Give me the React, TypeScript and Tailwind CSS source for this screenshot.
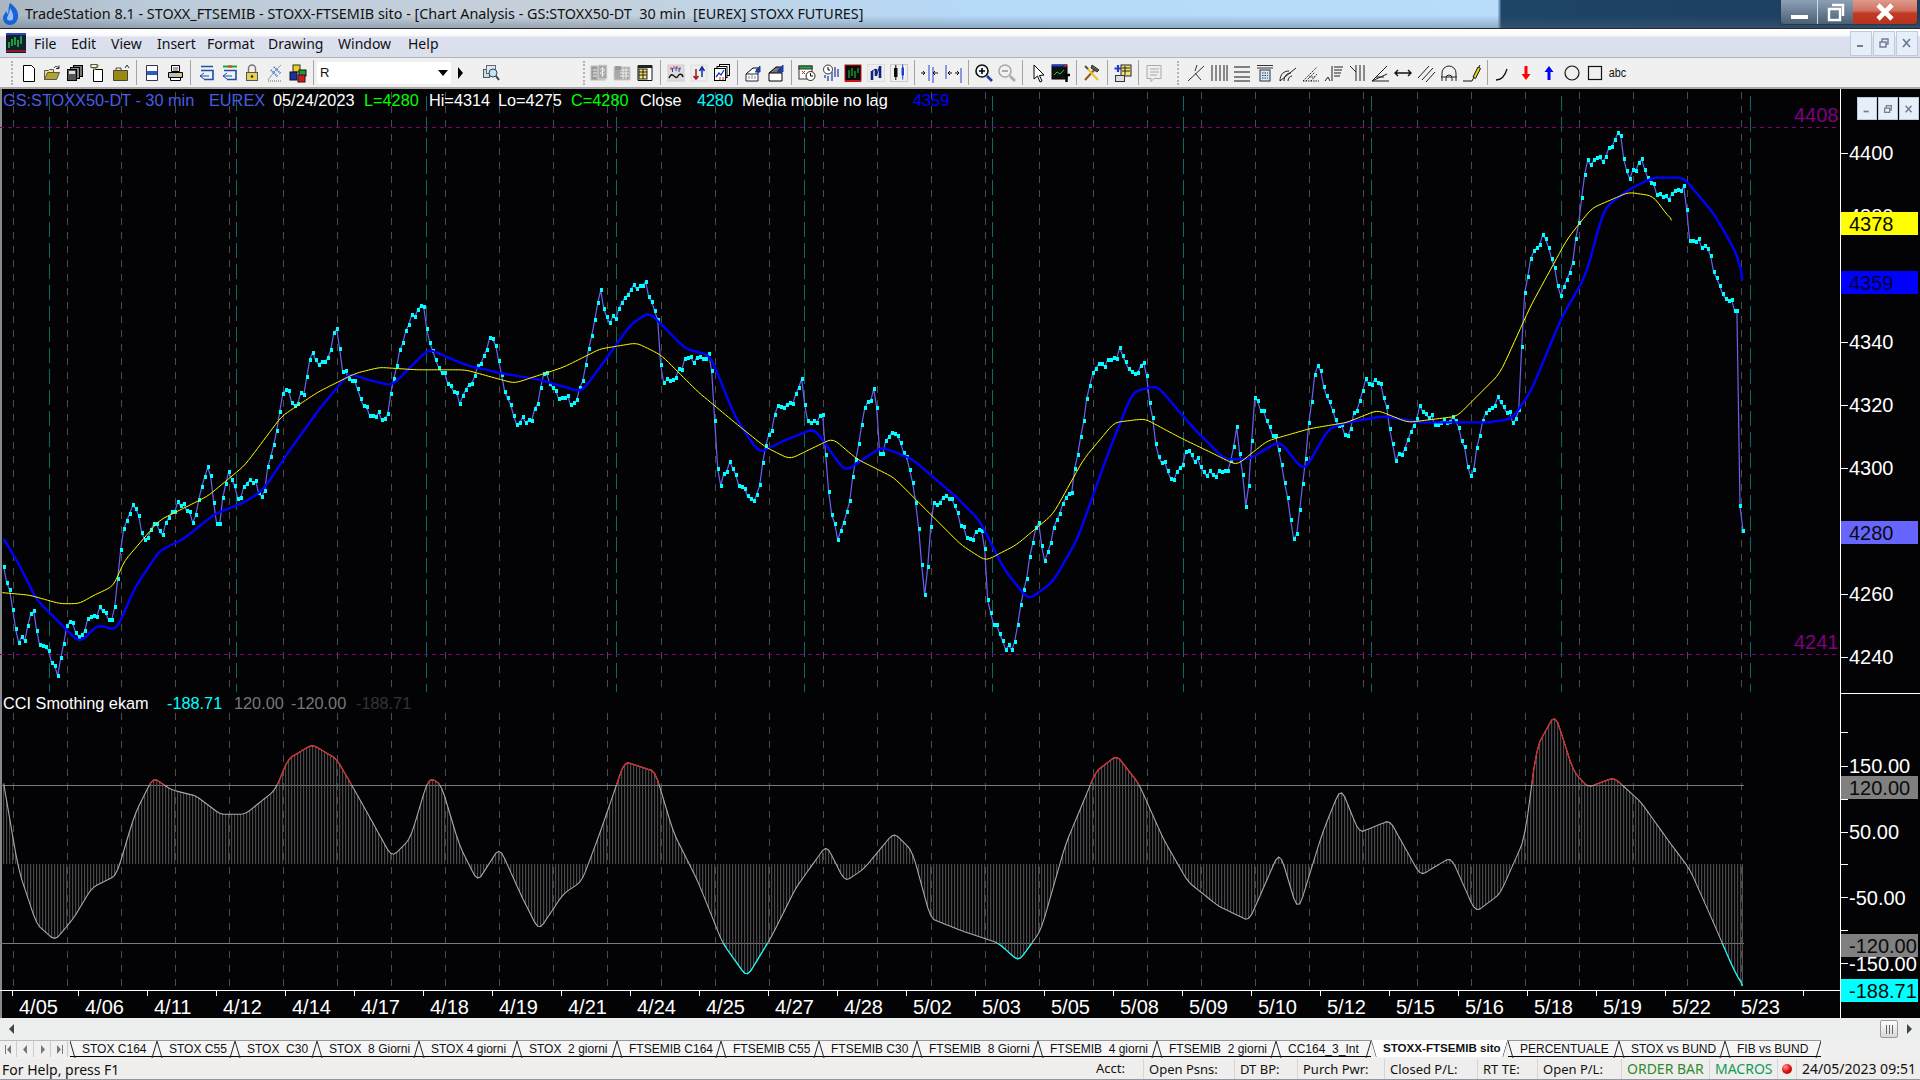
import React from 'react';

// reference coordinates were read off at 1568 wide, S scales them up to 1920
const S = 1920 / 1568;

type Pt = [number, number];

const PRICE: Pt[] = [[3,463],[8,482],[14,520],[20,525],[26,497],[32,525],[40,530],[47,553],[52,525],[58,505],[64,522],[72,505],[85,500],[92,510],[96,470],[100,435],[106,417],[112,417],[118,445],[125,425],[133,435],[140,420],[150,410],[158,425],[170,380],[178,435],[186,380],[195,410],[205,390],[215,405],[220,375],[226,355],[232,315],[240,330],[248,320],[254,290],[262,300],[268,290],[275,265],[280,305],[290,315],[300,335],[316,345],[322,305],[332,265],[345,250],[352,285],[365,310],[375,330],[390,300],[403,275],[410,310],[422,345],[435,345],[445,300],[455,325],[470,330],[480,290],[490,240],[497,265],[512,240],[528,232],[537,260],[541,315],[552,310],[560,290],[575,295],[580,290],[585,360],[587,400],[595,375],[605,400],[617,410],[625,365],[635,335],[645,330],[655,310],[660,350],[672,340],[678,415],[685,440],[692,420],[700,370],[705,335],[715,315],[718,375],[730,350],[740,370],[748,410],[755,490],[762,410],[775,405],[790,440],[803,430],[807,500],[820,525],[827,530],[835,490],[848,420],[852,460],[865,420],[875,400],[885,340],[892,305],[905,295],[915,285],[925,310],[935,295],[945,370],[958,395],[970,365],[985,390],[1005,380],[1010,350],[1018,420],[1025,320],[1035,345],[1045,370],[1058,445],[1065,385],[1075,295],[1090,340],[1100,360],[1115,310],[1128,315],[1140,375],[1150,360],[1160,335],[1175,345],[1190,345],[1202,390],[1210,345],[1225,325],[1235,342],[1240,342],[1245,240],[1252,205],[1262,190],[1275,245],[1285,210],[1295,135],[1310,130],[1322,105],[1330,150],[1340,130],[1352,155],[1360,165],[1375,150],[1380,195],[1395,205],[1405,235],[1418.5,256],[1421,413],[1423.5,434]];

const BLUE: Pt[] = [[3,440],[15,460],[30,490],[50,510],[65,525],[80,510],[95,515],[110,480],[130,450],[150,440],[175,420],[200,410],[215,400],[235,370],[260,335],[285,305],[300,310],[320,315],[350,285],[380,298],[410,305],[440,310],[475,320],[490,300],[515,265],[530,255],[560,285],[580,290],[600,340],[620,370],[640,360],[665,350],[690,385],[720,365],[745,375],[780,405],[800,425],[820,465],[840,490],[860,475],[880,440],[905,370],[925,320],[945,315],[975,350],[1000,375],[1020,375],[1045,360],[1065,385],[1085,350],[1100,345],[1130,340],[1160,345],[1190,345],[1215,345],[1235,342],[1250,320],[1275,260],[1295,225],[1310,170],[1330,155],[1350,145],[1375,145],[1400,175],[1420,210],[1423,229]];

const YELLOW: Pt[] = [[2,484],[24,486],[49,493],[65,493],[75,487],[94,478],[100,460],[130,425],[170,405],[200,380],[230,340],[260,320],[290,305],[310,300],[340,302],[380,302],[420,313],[460,300],[490,285],[520,280],[540,290],[570,320],[600,345],[625,365],[645,375],[680,358],[700,375],[730,390],[760,420],[785,445],[805,458],[830,445],[860,420],[885,375],[910,345],[935,342],[965,358],[990,370],[1010,380],[1035,360],[1070,350],[1100,345],[1125,335],[1150,345],[1190,340],[1225,305],[1250,250],[1280,195],[1300,170],[1330,157],[1350,160],[1365,180]];

const CCI: Pt[] = [[3,640],[15,710],[30,755],[45,768],[60,750],[75,725],[95,715],[110,665],[125,635],[140,645],[160,650],[180,665],[200,665],[225,645],[235,620],[255,608],[275,620],[295,655],[320,700],[335,685],[350,635],[360,640],[375,690],[390,720],[408,692],[425,730],[440,760],[460,730],[475,720],[490,680],[510,622],[535,630],[550,680],[570,720],[590,770],[610,798],[630,765],[650,725],[675,690],[690,720],[705,710],[730,680],[745,695],[760,750],[785,760],[815,770],[832,785],[850,760],[870,690],[895,630],[912,617],[930,640],[950,685],[970,720],[995,740],[1020,752],[1045,695],[1060,745],[1080,680],[1095,643],[1110,680],[1135,670],[1160,715],[1185,700],[1205,745],[1225,730],[1245,685],[1255,610],[1270,583],[1285,630],[1297,643],[1318,635],[1340,655],[1365,690],[1380,710],[1400,755],[1415,790],[1423,805]];

const scale = (pts: Pt[]): Pt[] => pts.map(([x, y]) => [x * S, y * S]);

// walk the polyline in equal x steps
const resample = (pts: Pt[], step: number): Pt[] => {
  const out: Pt[] = [];
  let seg = 0;
  for (let x = pts[0][0]; x <= pts[pts.length - 1][0]; x += step) {
    while (seg < pts.length - 2 && pts[seg + 1][0] < x) seg++;
    const [x0, y0] = pts[seg];
    const [x1, y1] = pts[seg + 1];
    out.push([x, y0 + ((y1 - y0) * (x - x0)) / (x1 - x0)]);
  }
  out.push(pts[pts.length - 1]);
  return out;
};

const smooth = (pts: Pt[], passes: number): Pt[] => {
  let cur = pts;
  for (let p = 0; p < passes; p++) {
    cur = cur.map((pt, i) =>
      i === 0 || i === cur.length - 1 ? pt : [pt[0], (cur[i - 1][1] + pt[1] + cur[i + 1][1]) / 3] as Pt,
    );
  }
  return cur;
};

const toPath = (pts: Pt[]) => pts.map(([x, y]) => `${x.toFixed(1)},${y.toFixed(1)}`).join(' ');

// the bars: 3px apart with a bit of noise so the line looks like ticks
const priceBars: Pt[] = (() => {
  const raw = scale(PRICE);
  const body = resample(raw.slice(0, -2), 3).map(
    ([x, y], i) => [x, y + Math.sin(i * 1.7) * 2.5 + Math.sin(i * 2.9) * 2 + Math.sin(i * 0.53) * 2.5] as Pt,
  );
  return [...body, raw[raw.length - 2], raw[raw.length - 1]];
})();
const bluePts = smooth(resample(scale(BLUE), 3), 2);
const yellowPts = smooth(resample(scale(YELLOW), 3), 2);
const cciPts = smooth(resample(scale(CCI), 3), 1);

const ZERO_Y = 864;
const grayX = Array.from({ length: 33 }, (_, i) => 13 + i * 54);
const tealX = [49, 236, 426, 616, 804, 992, 1183, 1371, 1561, 1750];
const tickX = [12, ...Array.from({ length: 26 }, (_, i) => 78 + i * 69)];

const priceY = (p: number) => 152.5 + (4400 - p) * 3.15 - 89;

const DATES = ['4/06','4/11','4/12','4/14','4/17','4/18','4/19','4/21','4/24','4/25','4/27','4/28','5/02','5/03','5/05','5/08','5/09','5/10','5/12','5/15','5/16','5/18','5/19','5/22','5/23'];

const TABS = [
  { label: 'STOX C164', w: 'w-[87px]' },
  { label: 'STOX C55', w: 'w-[78px]' },
  { label: 'STOX  C30', w: 'w-[82px]' },
  { label: 'STOX  8 Giorni', w: 'w-[102px]' },
  { label: 'STOX 4 giorni', w: 'w-[98px]' },
  { label: 'STOX  2 giorni', w: 'w-[100px]' },
  { label: 'FTSEMIB C164', w: 'w-[104px]' },
  { label: 'FTSEMIB C55', w: 'w-[98px]' },
  { label: 'FTSEMIB C30', w: 'w-[98px]' },
  { label: 'FTSEMIB  8 Giorni', w: 'w-[121px]' },
  { label: 'FTSEMIB  4 giorni', w: 'w-[119px]' },
  { label: 'FTSEMIB  2 giorni', w: 'w-[119px]' },
  { label: 'CC164_3_Int', w: 'w-[95px]' },
  { label: 'STOXX-FTSEMIB sito', w: 'w-[137px]', active: true },
  { label: 'PERCENTUALE', w: 'w-[111px]' },
  { label: 'STOX vs BUND', w: 'w-[106px]' },
  { label: 'FIB vs BUND', w: 'w-[96px]' },
];

const Ico: React.FC<{ children: React.ReactNode }> = ({ children }) => (
  <svg width="20" height="20" viewBox="0 0 20 20" fill="none" stroke="#000" strokeWidth="1">
    {children}
  </svg>
);

const ICONS: Record<string, React.ReactNode> = {
  newDoc: <path d="M4.5 2.5h8l3 3v13h-11z" fill="#fff" />,
  open: <><path d="M2.5 16.5v-9h4l1 -1h4v3" fill="#f4e38a" stroke="#555" /><path d="M2.5 16.5l3-7h12l-3 7z" fill="#b5a230" stroke="#555" /><path d="M12 5c1-2 3-2 5 0M17 2.5v3h-3" stroke="#222" /></>,
  saveAll: <><rect x="8.5" y="2.5" width="9" height="11" fill="#777" /><rect x="5.5" y="4.5" width="9" height="11" fill="#888" /><rect x="2.5" y="6.5" width="9" height="11" fill="#555" /><rect x="4" y="8" width="6" height="3" fill="#ddd" stroke="none" /></>,
  saveNew: <><path d="M5.5 6.5h9v12h-9z" fill="#fff" /><path d="M2.5 2l4 4 4-4" stroke="#b5a230" strokeWidth="2" /><rect x="3" y="1.5" width="6" height="3" fill="#eee" stroke="#555" /></>,
  folderUp: <><path d="M2.5 17.5v-10h14v10z" fill="#9a8a10" stroke="#444" /><path d="M5 7v-2h5v2" stroke="#444" /><path d="M14 5l2-3 2 3" stroke="#234" /></>,
  doc: <><path d="M4.5 2.5h11v15h-11z" fill="#fff" stroke="#335" /><rect x="5" y="8" width="10" height="4" fill="#2a5fc8" stroke="none" /></>,
  printer: <><path d="M6.5 2.5h8v6h-8z" fill="#fff" /><path d="M3.5 9.5h14v5h-14z" fill="#bbb" /><path d="M5.5 14.5h10v3h-10z" fill="#fff" /><path d="M8 5h5M8 7h5" stroke="#555" /><rect x="13" y="10.5" width="3" height="2" fill="#f4d03f" stroke="none" /></>,
  backBlue: <><path d="M5 3.5h12M5 7.5h12v9h-9" stroke="#1c4fa8" strokeWidth="1.6" /><path d="M8 10l-4 3 4 3" stroke="#1c4fa8" /><path d="M4 13h9" stroke="#1c4fa8" /></>,
  backBar: <><path d="M4 3.5h14" stroke="#17a82e" strokeWidth="2" /><rect x="9" y="2.5" width="4" height="2" fill="#e33" stroke="none" /><path d="M5 7.5h12v9h-9" stroke="#1c4fa8" strokeWidth="1.6" /><path d="M8 10l-4 3 4 3M4 13h9" stroke="#1c4fa8" /></>,
  lock: <><path d="M6.5 9V5.5a3.5 3.5 0 0 1 7 0V9" stroke="#777" strokeWidth="1.5" /><rect x="4.5" y="9.5" width="11" height="8" fill="#e9cf52" stroke="#555" /><circle cx="10" cy="13.5" r="1.2" fill="#222" stroke="none" /></>,
  antenna: <><path d="M3 17l6-8 7-7" stroke="#999" /><path d="M9 4l7 7M6 7l7 7" stroke="#2a6fd8" strokeDasharray="1 1" strokeWidth="2" /><path d="M3 18h13" stroke="#666" strokeDasharray="1 1" /></>,
  cubes: <><rect x="5" y="2" width="7" height="7" fill="#e8d020" stroke="#332" /><rect x="2" y="9" width="7" height="8" fill="#1d2f9c" stroke="#112" /><rect x="11" y="7" width="7" height="6" fill="#1c9c35" stroke="#112" /><rect x="10" y="12" width="7" height="7" fill="#cc1d1d" stroke="#311" /></>,
  finder: <><rect x="2.5" y="6.5" width="6" height="8" fill="#cdd" stroke="#556" /><rect x="5.5" y="2.5" width="9" height="8" fill="#dfe8f0" stroke="#667" /><circle cx="12" cy="10" r="4" fill="#bfe3f7" stroke="#345" /><path d="M15 13l3 4" strokeWidth="2" stroke="#345" /></>,
  dollar: <><rect x="2" y="3" width="14" height="14" fill="#9c9c9c" stroke="#bbb" /><rect x="9" y="2" width="9" height="14" fill="#a8a8a8" stroke="#ddd" /><path d="M4 7h4M4 10h4M4 13h4" stroke="#eee" /><path d="M13.5 4v10M11.5 7c0-2 4-2 4 0s-4 1-4 3 4 2 4 0" stroke="#eee" /></>,
  grid: <><rect x="2" y="4" width="16" height="13" fill="#a8a8a8" stroke="#ccc" /><path d="M8 7h9M8 10h9M8 13h9M11 5v11M14 5v11" stroke="#ececec" /><rect x="3" y="3" width="6" height="4" fill="#999" stroke="none" /></>,
  sheet: <><path d="M3 2.5h14v15H3z" fill="#fff" stroke="#111" /><rect x="3" y="2" width="14" height="3" fill="#222" stroke="none" /><rect x="4" y="6" width="8" height="10" fill="#f3e46a" stroke="#222" /><path d="M4 9h8M4 12h8M8 6v10" stroke="#222" /></>,
  heat: <><rect x="2" y="2" width="16" height="16" fill="#ddd" stroke="#ccc" /><path d="M3 15c2-4 3-4 5-2s3 2 4 0 4-3 5 1" stroke="#111" strokeWidth="1.4" /><path d="M5 4v3M8 3v3M11 3v3M14 4v3" stroke="#d02020" /><path d="M6.5 5v4M10 4v4M13 5v4" stroke="#2040c0" /></>,
  upDown: <><rect x="2" y="2" width="16" height="16" fill="#eee" stroke="#ddd" /><path d="M7 6v10M4.5 13l2.5 3 2.5-3" stroke="#a01515" strokeWidth="1.5" /><path d="M13 14V5M10.5 8L13 4l2.5 4" stroke="#1530a0" strokeWidth="1.5" /></>,
  windows: <><rect x="7.5" y="1.5" width="10" height="11" fill="#fff" /><rect x="5" y="3.5" width="10" height="11" fill="#fff" /><rect x="2.5" y="5.5" width="11" height="12" fill="#fff" /><path d="M4 14l3-4 2 2 3-5" stroke="#1040c0" strokeWidth="1.3" /><path d="M8 17v-3M11 17v-3" stroke="#c02020" /></>,
  chartIn: <><path d="M3 11l7-6h5v6" fill="#fff" /><path d="M3 11h12v7H3z" fill="#fff" stroke="#224" /><path d="M6 13v3M9 12v4M12 13v3" stroke="#888" /><path d="M13 7l4-4v6h-5" fill="#1c3fa0" stroke="#1c3fa0" /></>,
  chartOut: <><path d="M3 10l7-6h5v6" fill="#777" /><path d="M3 10h13v8H3z" fill="#fff" stroke="#000" /><path d="M12 7l5-5v7h-6" fill="#1c3fa0" stroke="#1c3fa0" /></>,
  calClock: <><rect x="2" y="3" width="13" height="13" fill="#fff" stroke="#333" /><rect x="2" y="3" width="13" height="3" fill="#27a83b" stroke="#333" /><path d="M5 8l3 3M8 8l-3 3" stroke="#c02020" /><circle cx="13.5" cy="13" r="4.5" fill="#fff" stroke="#222" /><path d="M13.5 10v3h2.5" /></>,
  clockBars: <><circle cx="8" cy="6.5" r="4.5" fill="#fff" stroke="#333" /><path d="M8 4v3h2" /><path d="M15 4v10M18 6v8M12 9v9M8 13v5M5 12v3" stroke="#4258a8" strokeWidth="1.5" /></>,
  greenScr: <><rect x="2" y="2" width="16" height="16" fill="#0a0a0a" stroke="#c01515" /><path d="M6 7v8M9 5v8M12 8v7M15 5v5" stroke="#1fd03a" /><path d="M2 18h16" stroke="#d01515" strokeWidth="2" /></>,
  blueBars: <><rect x="1.5" y="1.5" width="17" height="17" fill="#eee" stroke="#ddd" /><path d="M6 8v9M10 6v7M14 3v12" stroke="#11207a" strokeWidth="2.6" /><path d="M6 8l4-2M10 13l4-10" stroke="#11207a" /></>,
  candles: <><rect x="1.5" y="1.5" width="17" height="17" fill="#eee" stroke="#ccc" /><rect x="5" y="5" width="3.5" height="9" fill="#111" stroke="none" /><path d="M6.8 2v15" /><rect x="12" y="4" width="3.5" height="9" fill="#1c3fd0" stroke="#fff" /><path d="M13.7 1.5v15" stroke="#1c3fd0" /></>,
  barsIn: <><path d="M9 2v16M13 4v16" stroke="#2045c8" /><path d="M1 10h4M3 8l2 2-2 2M13 10h5M15 8l-2 2 2 2" stroke="#111" /></>,
  barsOut: <><path d="M3 2v14M18 5v15" stroke="#2045c8" /><path d="M5 10h4M7 8l-2 2 2 2M12 10h4M14 8l2 2-2 2" stroke="#111" /></>,
  zoomIn: <><circle cx="8" cy="8" r="6" fill="#eef7fb" stroke="#111" strokeWidth="1.6" /><path d="M13 13l5 5" stroke="#1c3fa0" strokeWidth="2.6" /><path d="M5 8h6M8 5v6" strokeWidth="1.6" /></>,
  zoomOut: <><circle cx="8" cy="8" r="6" fill="#f2f2f2" stroke="#aaa" strokeWidth="1.6" /><path d="M13 13l5 5" stroke="#aaa" strokeWidth="2.6" /><path d="M5 8h6" stroke="#999" strokeWidth="1.6" /></>,
  cursor: <path d="M6 2l0 14 3.5-3 2.5 6 2-1-2.5-5.5 4.5-.5z" fill="#fff" />,
  chartT: <><rect x="1" y="2" width="15" height="14" fill="#111" /><path d="M1 2.5h15" stroke="#1c3fd0" strokeWidth="2" /><rect x="13" y="1.5" width="3" height="2" fill="#d02020" stroke="none" /><path d="M3 12l3-3 3 2 4-4" stroke="#20d040" /><path d="M12 12h7M15.5 12v7" strokeWidth="2.4" /></>,
  tools: <><path d="M3 17L14 5" stroke="#8a5a20" strokeWidth="2" /><path d="M10 2l7 5-2 2-6-4z" fill="#555" stroke="#333" /><path d="M4 4l12 13" stroke="#e8c820" strokeWidth="2" /><path d="M3 3l3 3" stroke="#555" strokeWidth="2" /></>,
  addList: <><rect x="8" y="2" width="10" height="11" fill="#f3e46a" stroke="#223" /><path d="M9 5h8M9 8h8M12 3v9" stroke="#223" /><path d="M5 2v7M1.5 5.5h7" stroke="#1c3fd0" strokeWidth="2.2" /><rect x="2.5" y="12.5" width="9" height="6" fill="#ddd" stroke="#335" /></>,
  noteOff: <><path d="M3 2.5h14v13h-7l-3 3v-3H3z" fill="#eee" stroke="#aaa" /><path d="M6 6h9M6 9h9M6 12h7" stroke="#aaa" /></>,
  fork: <><path d="M2 18L18 3M9 10l6 7" stroke="#333" /><path d="M11 2l-2 6" stroke="#333" /></>,
  vlines: <path d="M3 2v16M7 2v16M11 2v16M15 2v16M18 2v16" stroke="#222" />,
  hlines: <path d="M2 4h16M2 9h16M2 14h16M2 18h16" stroke="#111" strokeWidth="1.2" />,
  calc: <><path d="M2 2.5h16M2 5h16" stroke="#333" /><rect x="5" y="7" width="10" height="11" fill="#dbe8f8" stroke="#234" /><path d="M7 10h6M7 12.5h6M7 15h6" stroke="#234" strokeDasharray="1.5 1" /></>,
  arcs: <><path d="M2 18c0-7 4-10 9-10M6 18c0-5 3-8 7-8M10 18c0-3 2-5 4-5" stroke="#222" /><path d="M2 18L18 5" stroke="#222" /></>,
  fan: <path d="M2 18h16M2 18L16 4M8 14l6 0M5 18L14 9M10 18l6-7" stroke="#222" strokeDasharray="1.5 1" />,
  speed: <><path d="M1 18l3-4 2 4M8 18V3M10 4h9M10 7h8M10 10h7M10 13h6" stroke="#222" /></>,
  gann: <path d="M3 3l6 6M9 2v16M13 2v16M17 2v16" stroke="#222" />,
  angle: <path d="M2 18L17 3M2 18h17M6 14l8 0M2 18l15-7" stroke="#222" />,
  arrows: <path d="M2 10h16M5 7l-3 3 3 3M15 7l3 3-3 3" stroke="#111" strokeWidth="1.4" />,
  channel: <path d="M2 15L13 3M6 17L17 5M10 19L19 9" stroke="#222" />,
  cycles: <path d="M3 18v-8a7 7 0 0 1 14 0v8M7 18v-3a3 3 0 0 1 6 0v3M2 14h16" stroke="#222" />,
  pencil: <><path d="M1 18h9l8-16" stroke="#111" /><path d="M11 14l5-10 2.5 1.5-5 10z" fill="#e8d020" stroke="#111" /></>,
  curve: <path d="M3 17c5 0 9-4 11-11" stroke="#111" strokeWidth="1.3" />,
  arrowDown: <path d="M8.5 3h3v8h3l-4.5 6-4.5-6h3z" fill="#f00" stroke="none" />,
  arrowUp: <path d="M8.5 17h3V9h3L10 3 5.500 9h3z" fill="#00f" stroke="none" />,
  circle: <circle cx="10" cy="10" r="7" stroke="#111" strokeWidth="1.2" />,
  square: <rect x="3.500" y="3.500" width="13" height="13" stroke="#111" strokeWidth="1.2" />,
};

const Tool: React.FC<{ name: string }> = ({ name }) => (
  <div className="w-[23px] h-[22px] flex items-center justify-center shrink-0">
    <Ico>{ICONS[name]}</Ico>
  </div>
);

const Sep = () => <div className="w-px h-[25px] bg-[#a4a4a4] ml-[4px] mr-[3px] shrink-0" />;

const Grip = () => <div className="w-[2px] h-[24px] border-l-2 border-dotted border-[#b4b4b4] shrink-0" />;

const Tools: React.FC<{ names: string[] }> = ({ names }) => (
  <>
    {names.map((n, i) => (
      <Tool key={i} name={n} />
    ))}
  </>
);

const MdiButtons: React.FC<{ className?: string }> = ({ className }) => (
  <div className={`flex gap-px ${className || ''}`}>
    {['min', 'restore', 'close'].map((b) => (
      <div key={b} className="w-[22px] h-[25px] bg-[#e6eef9] border border-[#bcccdd] flex items-center justify-center">
        <svg width="12" height="12" viewBox="0 0 12 12" fill="none" stroke="#6e7f94" strokeWidth="1.4">
          {b === 'min' && <path d="M2 9h6" strokeWidth="2" />}
          {b === 'restore' && <path d="M2 5h6v5H2zM4 5V2h6v5H8" />}
          {b === 'close' && <path d="M2 2l7 8M9 2l-7 8" strokeWidth="1.8" />}
        </svg>
      </div>
    ))}
  </div>
);

const TitleBar = () => (
  <div className="h-[28px] flex items-center relative font-['Noto_Sans',sans-serif] text-[14.4px] text-[#111] bg-[linear-gradient(180deg,rgba(255,255,255,0)_55%,rgba(80,100,120,.4)_100%),linear-gradient(90deg,#a9b6c2_0,#bccbda_8%,#c6d0da_30%,#b6d9f8_50%,#b9dcfb_78%,#1e4468_78.2%,#1c3e60_100%)]">
    <svg width="20" height="24" viewBox="0 0 20 24" className="ml-[1px] shrink-0">
      <path d="M9 1c6 4 9 9 8 15-1 4-4 7-8 7-4 0-7-3-7-7 0-3 2-4 3-7 1 1 1 3 2 3 1-3 0-7 2-11z" fill="#1b62d8" />
      <path d="M9 6c2 3 4 7 3 11-1 2-5 2-6 0 0-3 3-6 3-11z" fill="#8fc3f5" />
    </svg>
    <span className="ml-[4px] whitespace-pre">TradeStation 8.1 - STOXX_FTSEMIB - STOXX-FTSEMIB sito - [Chart Analysis - GS:STOXX50-DT  30 min  [EUREX] STOXX FUTURES]</span>
    <div className="ml-auto mr-[2px] self-start flex h-[25px] border border-t-0 border-[#2c3a48] rounded-b-[4px] overflow-hidden">
      <div className="w-[37px] flex items-end justify-center pb-[5px] bg-[linear-gradient(180deg,#8ba0b4,#4a6074)] border-r border-[#cfd8e0]">
        <div className="w-[17px] h-[4px] bg-white" />
      </div>
      <div className="w-[35px] flex items-center justify-center bg-[linear-gradient(180deg,#8ba0b4,#4a6074)]">
        <svg width="20" height="20" viewBox="0 0 20 20" fill="none" stroke="#fff" strokeWidth="2.4">
          <path d="M6 3h11v11M3 7h11v11H3z" />
        </svg>
      </div>
      <div className="w-[64px] flex items-center justify-center bg-[linear-gradient(180deg,#dd9a8a,#d07060_45%,#c13a22_55%,#b8341f)]">
        <svg width="20" height="18" viewBox="0 0 20 18" fill="none" stroke="#fff" strokeWidth="4.6">
          <path d="M3 2l14 14M17 2L3 16" />
        </svg>
      </div>
    </div>
  </div>
);

const MENU = [
  { t: 'File', w: 'w-[37px]' },
  { t: 'Edit', w: 'w-[40px]' },
  { t: 'View', w: 'w-[46px]' },
  { t: 'Insert', w: 'w-[50px]' },
  { t: 'Format', w: 'w-[61px]' },
  { t: 'Drawing', w: 'w-[70px]' },
  { t: 'Window', w: 'w-[70px]' },
  { t: 'Help', w: 'w-[40px]' },
];

const MenuBar = () => (
  <div className="h-[30px] flex items-center border-t border-[#2a2a2a] border-b border-b-[#b0b2bc] font-['Noto_Sans',sans-serif] text-[14px] text-[#111] bg-[linear-gradient(180deg,#fff_0,#fbfbfd_22%,#dde1ef_30%,#dadfec_100%)]">
    <svg width="20" height="20" viewBox="0 0 20 20" className="ml-[6px] mr-[8px] shrink-0">
      <rect width="20" height="20" fill="#10202c" />
      <rect y="0" width="20" height="2" fill="#3340c0" />
      <path d="M3 15V9M6 13V6M9 12V4M12 14V7M15 11V3" stroke="#27d040" strokeWidth="1.4" />
      <path d="M0 18h20" stroke="#c02020" strokeWidth="1.4" />
    </svg>
    {MENU.map((m) => (
      <span key={m.t} className={m.w}>{m.t}</span>
    ))}
    <MdiButtons className="ml-auto mr-[2px]" />
  </div>
);

const Toolbar = () => (
  <div className="h-[31px] flex items-center bg-[#f0f0f0] border-b-2 border-[#a8a8a8] pl-[11px]">
    <Grip />
    <div className="w-[4px]" />
    <Tools names={['newDoc', 'open', 'saveAll', 'saveNew', 'folderUp']} />
    <Sep />
    <Tools names={['doc', 'printer']} />
    <Sep />
    <Tools names={['backBlue', 'backBar', 'lock', 'antenna', 'cubes']} />
    <Sep />
    <div className="w-[134px] h-[22px] bg-white rounded-[2px] flex items-center justify-between pl-[3px] pr-[3px] font-['Liberation_Sans',sans-serif] text-[13px] text-[#111]">
      <span>R</span>
      <span className="w-0 h-0 border-x-[5px] border-x-transparent border-t-[6px] border-t-black" />
    </div>
    <span className="ml-[7px] w-0 h-0 border-y-[6px] border-y-transparent border-l-[5px] border-l-black" />
    <div className="w-[16px]" />
    <Tool name="finder" />
    <div className="w-[81px]" />
    <Grip />
    <div className="w-[2px]" />
    <Tools names={['dollar', 'grid', 'sheet']} />
    <Sep />
    <Tools names={['heat', 'upDown', 'windows']} />
    <Sep />
    <Tools names={['chartIn', 'chartOut']} />
    <Sep />
    <Tools names={['calClock', 'clockBars', 'greenScr', 'blueBars', 'candles']} />
    <Sep />
    <Tools names={['barsIn', 'barsOut']} />
    <Sep />
    <Tools names={['zoomIn', 'zoomOut']} />
    <Sep />
    <Tools names={['cursor', 'chartT']} />
    <Sep />
    <Tool name="tools" />
    <Sep />
    <Tool name="addList" />
    <Sep />
    <Tool name="noteOff" />
    <div className="w-[12px]" />
    <Grip />
    <div className="w-[5px]" />
    <Tools names={['fork', 'vlines', 'hlines', 'calc', 'arcs', 'fan', 'speed', 'gann', 'angle', 'arrows', 'channel', 'cycles', 'pencil']} />
    <Sep />
    <Tools names={['curve', 'arrowDown', 'arrowUp', 'circle', 'square']} />
    <span className="w-[23px] text-center font-['Liberation_Sans',sans-serif] text-[12px] text-[#111] scale-x-90">abc</span>
  </div>
);

const PlotSvg = () => (
  <svg width="1840" height="901" viewBox="0 89 1840 901" className="block">
    <defs>
      <clipPath id="overbought"><rect x="0" y="0" width="1840" height="785" /></clipPath>
      <clipPath id="oversold"><rect x="0" y="943" width="1840" height="60" /></clipPath>
    </defs>
    {/* time grid */}
    {grayX.map((x) => (
      <g key={x} stroke="#4c4c4c" strokeDasharray="7 7">
        <line x1={x + 0.5} y1="92" x2={x + 0.5} y2="692" />
        <line x1={x + 0.5} y1="713" x2={x + 0.5} y2="987" />
      </g>
    ))}
    {tealX.map((x) => (
      <line key={x} x1={x + 0.5} y1="96" x2={x + 0.5} y2="692" stroke="#0c6a66" strokeDasharray="15 6" />
    ))}
    {/* high / low of the range */}
    <line x1="0" y1="127.500" x2="1838" y2="127.500" stroke="#800080" strokeDasharray="4 4" />
    <line x1="0" y1="654.500" x2="1838" y2="654.500" stroke="#800080" strokeDasharray="4 4" />

    <polyline points={toPath(priceBars)} fill="none" stroke="#6a62ee" strokeWidth="1.2" />
    {priceBars.map(([x, y], i) => (
      <rect key={i} x={Math.round(x) - 1} y={Math.round(y) - 2} width="3" height="4" fill="#00ffff" shapeRendering="crispEdges" />
    ))}
    <polyline points={toPath(bluePts)} fill="none" stroke="#0000ff" strokeWidth="2.4" strokeLinejoin="round" />
    <polyline points={toPath(yellowPts)} fill="none" stroke="#ffff00" strokeWidth="1" />

    {/* CCI pane */}
    <line x1="0" y1="785.500" x2="1744" y2="785.500" stroke="#7a7a7a" />
    <line x1="0" y1="943.500" x2="1744" y2="943.500" stroke="#7a7a7a" />
    {cciPts.map(([x, y], i) => (
      <line key={i} x1={x} y1={ZERO_Y} x2={x} y2={y} stroke="#565656" strokeWidth="1" />
    ))}
    <polyline points={toPath(cciPts)} fill="none" stroke="#aaaaaa" strokeWidth="1.100" />
    <polyline points={toPath(cciPts)} fill="none" stroke="#e02020" strokeWidth="1.100" clipPath="url(#overbought)" />
    <polyline points={toPath(cciPts)} fill="none" stroke="#00ffff" strokeWidth="1.100" clipPath="url(#oversold)" />
  </svg>
);

const PRICE_LABELS = [4400, 4380, 4340, 4320, 4300, 4260, 4240];
const PRICE_TICKS = [4400, 4380, 4360, 4340, 4320, 4300, 4280, 4260, 4240];
const CCI_TICKS = [732, 766, 799, 832, 864, 897, 930, 963];
const CCI_LABELS = [
  { t: '150.00', y: 766 },
  { t: '50.00', y: 832 },
  { t: '-50.00', y: 898 },
  { t: '-150.00', y: 964 },
];

const AxisText: React.FC<{ y: number; children: React.ReactNode }> = ({ y, children }) => (
  <span className="absolute left-[8px] leading-none -translate-y-1/2 text-white" style={{ top: y }}>
    {children}
  </span>
);

const Tag: React.FC<{ top: string; bg: string; color?: string; children: React.ReactNode }> = ({ top, bg, color, children }) => (
  <div className={`absolute left-0 w-[77px] h-[23px] pl-[8px] leading-[24px] ${top} ${bg} ${color || 'text-[#0a0a0a]'}`}>{children}</div>
);

const MdiMini = () => (
  <div className="absolute top-[8px] left-[16px] flex gap-px">
    {['min', 'restore', 'close'].map((b) => (
      <div key={b} className="w-[20px] h-[23px] bg-[#e6eef9] border border-[#bcccdd] flex items-center justify-center">
        <svg width="10" height="10" viewBox="0 0 12 12" fill="none" stroke="#6e7f94" strokeWidth="1.5">
          {b === 'min' && <path d="M2 9h6" strokeWidth="2" />}
          {b === 'restore' && <path d="M2 5h6v5H2zM4 5V2h6v5H8" />}
          {b === 'close' && <path d="M2 2l7 8M9 2l-7 8" strokeWidth="1.8" />}
        </svg>
      </div>
    ))}
  </div>
);

const PriceAxis = () => (
  <div className="w-[80px] h-[929px] relative border-l border-white text-[20px]">
    {PRICE_TICKS.map((p) => (
      <div key={p} className="absolute left-0 w-[7px] h-px bg-white" style={{ top: priceY(p) }} />
    ))}
    {CCI_TICKS.map((y) => (
      <div key={y} className="absolute left-0 w-[7px] h-px bg-white" style={{ top: y - 89 }} />
    ))}
    <div className="absolute -left-px w-[80px] h-px bg-white top-[604px]" />
    {PRICE_LABELS.map((p) => (
      <AxisText key={p} y={priceY(p)}>{p}</AxisText>
    ))}
    {CCI_LABELS.map((l) => (
      <AxisText key={l.t} y={l.y - 89}>{l.t}</AxisText>
    ))}
    <Tag top="top-[123px]" bg="bg-[#ffff00]">4378</Tag>
    <Tag top="top-[182px]" bg="bg-[#0000ff]" color="text-[#020230]">4359</Tag>
    <Tag top="top-[432px]" bg="bg-[#6666ff]">4280</Tag>
    <Tag top="top-[687px]" bg="bg-[#808080]">120.00</Tag>
    <Tag top="top-[845px]" bg="bg-[#808080]">-120.00</Tag>
    <Tag top="top-[890px]" bg="bg-[#00ffff]">-188.71</Tag>
    <MdiMini />
  </div>
);

const Chart = () => (
  <div className="h-[929px] flex bg-[#030306] font-['Liberation_Sans',Arial,sans-serif] border-l-2 border-[#8a8a8a]">
    <div className="w-[1838px] relative">
      <div className="-ml-[2px]">
        <PlotSvg />
      </div>
      {/* date axis */}
      <div className="h-[28px] relative border-t border-white -ml-[2px] w-[1840px] flex pl-[85px] text-[20px] text-white leading-[33px]">
        {tickX.map((x) => (
          <div key={x} className="absolute top-0 w-px h-[5px] bg-white" style={{ left: x }} />
        ))}
        <span className="absolute left-[19px]">4/05</span>
        {DATES.map((d) => (
          <span key={d} className="w-[69px] shrink-0">{d}</span>
        ))}
      </div>
      {/* legends lie over the plot */}
      <div className="absolute top-0 -left-[2px] pl-[3px] h-[23px] flex items-center text-[16.3px] whitespace-pre">
        <span className="w-[206px] text-[#4a5ce0]">GS:STOXX50-DT - 30 min</span>
        <span className="w-[64px] text-[#4a5ce0]">EUREX</span>
        <span className="w-[91px] text-white">05/24/2023</span>
        <span className="w-[65px] text-[#00ff00]">L=4280</span>
        <span className="w-[69px] text-white">Hi=4314</span>
        <span className="w-[73px] text-white">Lo=4275</span>
        <span className="w-[69px] text-[#00ff00]">C=4280</span>
        <span className="w-[57px] text-white">Close</span>
        <span className="w-[45px] text-[#00ffff]">4280</span>
        <span className="w-[171px] text-white">Media mobile no lag</span>
        <span className="text-[#0000ff]">4359</span>
      </div>
      <div className="absolute top-[604px] -left-[2px] pl-[3px] h-[21px] flex items-center text-[16.3px] whitespace-pre">
        <span className="w-[164px] text-white">CCI Smothing ekam</span>
        <span className="w-[67px] text-[#00ffff]">-188.71</span>
        <span className="w-[57px] text-[#777]">120.00</span>
        <span className="w-[65px] text-[#777]">-120.00</span>
        <span className="text-[#333]">-188.71</span>
      </div>
      <span className="absolute top-[16px] left-[1792px] text-[20px] leading-none text-[#800080]">4408</span>
      <span className="absolute top-[543px] left-[1792px] text-[20px] leading-none text-[#800080]">4241</span>
    </div>
    <PriceAxis />
  </div>
);

const Scrollbar = () => (
  <div className="h-[22px] flex items-center bg-[#edeeee] pr-[8px] pl-[9px]">
    <span className="w-0 h-0 border-y-[5px] border-y-transparent border-r-[5px] border-r-[#444]" />
    <div className="ml-auto w-[18px] h-[18px] mr-[9px] bg-[linear-gradient(180deg,#fdfdfd,#d8d8d8)] border border-[#9a9a9a] rounded-[2px] flex items-center justify-center gap-[2px]">
      <i className="w-px h-[9px] bg-[#666]" />
      <i className="w-px h-[9px] bg-[#666]" />
      <i className="w-px h-[9px] bg-[#666]" />
    </div>
    <span className="w-0 h-0 border-y-[5px] border-y-transparent border-l-[5px] border-l-[#444]" />
  </div>
);

const NAV = ['first', 'prev', 'next', 'last'];

const TabsRow = () => (
  <div className="h-[19px] flex items-start bg-[#f0f0f0] font-['Liberation_Sans',Arial,sans-serif] text-[12px] text-[#111]">
    <div className="w-[70px] h-[17px] flex border-t border-[#bbb] shrink-0">
      {NAV.map((n) => (
        <div key={n} className="w-[17px] h-[16px] flex items-center justify-center border-r border-[#ccc]">
          <svg width="9" height="9" viewBox="0 0 9 9" fill="#777">
            {n === 'first' && <path d="M7 0v9L3 4.500zM1 0h1v9H1z" />}
            {n === 'prev' && <path d="M6 0v9L2 4.500z" />}
            {n === 'next' && <path d="M3 0v9l4-4.500z" />}
            {n === 'last' && <path d="M2 0v9l4-4.500zM7 0h1v9H7z" />}
          </svg>
        </div>
      ))}
    </div>
    {TABS.map((t) => (
      <div
        key={t.label}
        className={`relative h-[17px] shrink-0 pl-[12px] leading-[16px] whitespace-pre ${t.w} ${
          t.active ? 'bg-white font-bold text-[11.6px] [clip-path:polygon(0_0,100%_0,calc(100%-5px)_100%,5px_100%)]' : 'bg-[#f6f6f6] border-b border-black border-t border-t-[#999]'
        }`}
      >
        {t.label}
        <svg width="6" height="17" className="absolute left-0 top-0" stroke="#222"><path d="M0 0l5 17" /></svg>
        <svg width="6" height="17" className="absolute right-0 top-0" stroke="#222"><path d="M6 0L1 17" /></svg>
      </div>
    ))}
  </div>
);

const STATUS = [
  { t: 'Open Psns:', w: 'w-[91px]' },
  { t: 'DT BP:', w: 'w-[63px]' },
  { t: 'Purch Pwr:', w: 'w-[87px]' },
  { t: 'Closed P/L:', w: 'w-[93px]' },
  { t: 'RT TE:', w: 'w-[60px]' },
  { t: 'Open P/L:', w: 'w-[84px]' },
];

const StatusBar = () => (
  <div className="h-[21px] flex items-center bg-[#f0eeec] border-b border-[#8d97a3] font-['Noto_Sans',sans-serif] text-[13px] text-[#111] whitespace-pre">
    <span className="pl-[2px] w-[1096px] text-[14px]">For Help, press F1</span>
    <span className="w-[47px]">Acct:</span>
    {STATUS.map((s) => (
      <span key={s.t} className={`${s.w} h-full pl-[5px] border-l border-[#d8d6d4] leading-[20px]`}>{s.t}</span>
    ))}
    <span className="w-[88px] h-full pl-[5px] border-l border-[#d8d6d4] leading-[20px] text-[14px] text-[#2e8b2e]">ORDER BAR</span>
    <span className="w-[68px] h-full pl-[5px] border-l border-[#d8d6d4] leading-[20px] text-[14px] text-[#0f9a5c]">MACROS</span>
    <span className="w-[19px] h-full border-l border-[#d8d6d4] flex items-center justify-center">
      <i className="w-[10px] h-[10px] rounded-full bg-[radial-gradient(circle_at_35%_30%,#ff9a9a,#e01010_50%,#8a0000)]" />
    </span>
    <span className="pl-[5px] h-full border-l border-[#d8d6d4] leading-[20px] text-[14px]">24/05/2023 09:51</span>
  </div>
);

export default function App() {
  return (
    <div className="w-[1920px] h-[1080px] overflow-hidden bg-[#f0f0f0] flex flex-col">
      <TitleBar />
      <MenuBar />
      <Toolbar />
      <Chart />
      <Scrollbar />
      <TabsRow />
      <StatusBar />
    </div>
  );
}
